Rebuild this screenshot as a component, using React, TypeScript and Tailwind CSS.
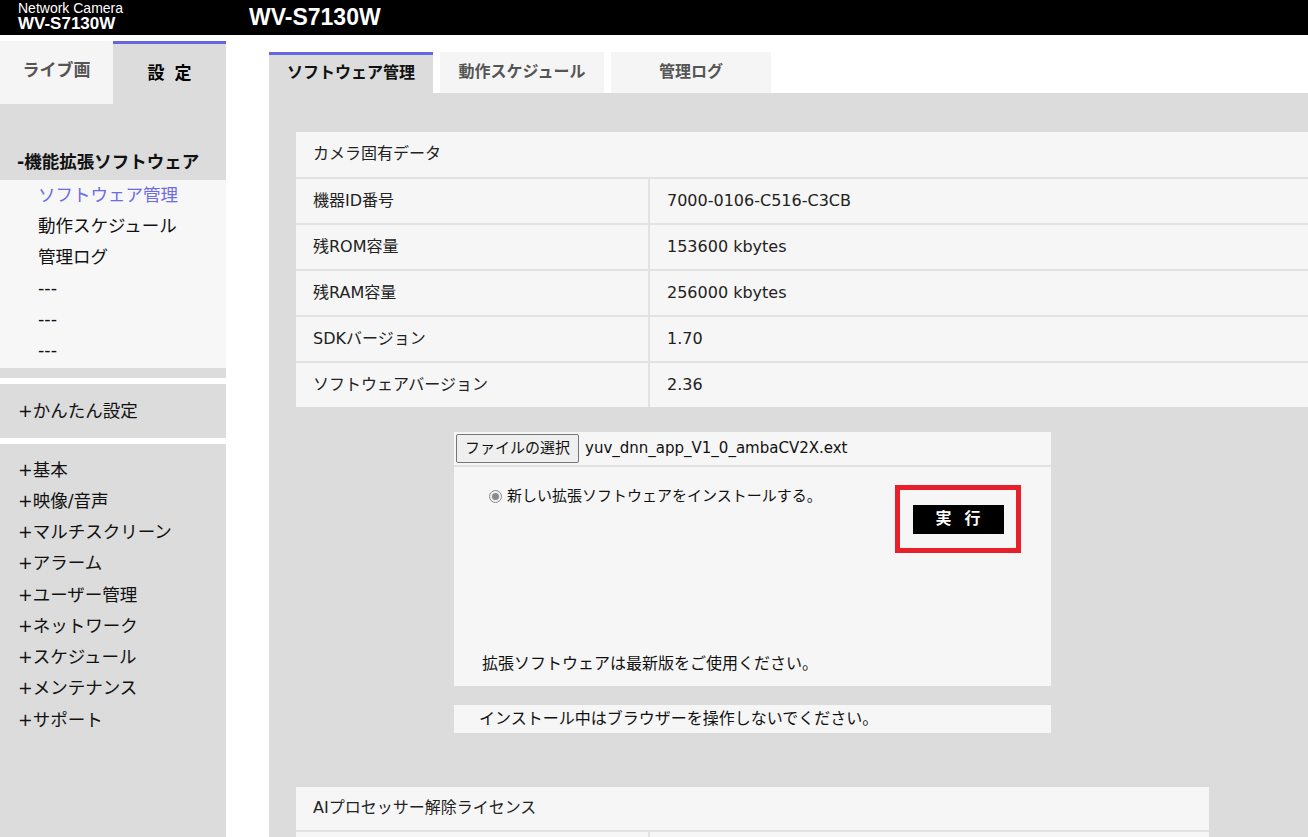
import React from "react";

const jp = { fontFamily: '"DejaVu Sans", "Noto Sans CJK JP", sans-serif' };

const cameraRows = [
  { label: "機器ID番号", value: "7000-0106-C516-C3CB" },
  { label: "残ROM容量", value: "153600 kbytes" },
  { label: "残RAM容量", value: "256000 kbytes" },
  { label: "SDKバージョン", value: "1.70" },
  { label: "ソフトウェアバージョン", value: "2.36" },
];

const subItems = ["ソフトウェア管理", "動作スケジュール", "管理ログ", "---", "---", "---"];

const menuItems = [
  "+基本",
  "+映像/音声",
  "+マルチスクリーン",
  "+アラーム",
  "+ユーザー管理",
  "+ネットワーク",
  "+スケジュール",
  "+メンテナンス",
  "+サポート",
];

function Sidebar() {
  return (
    <div className="w-[226px] shrink-0 pt-[6px] flex flex-col">
      <div className="flex h-[63px] shrink-0">
        <div className="w-[113px] bg-[#f5f5f5] flex items-center justify-center pb-[4px] text-[17px] font-bold text-[#555]">
          ライブ画
        </div>
        <div className="w-[113px] bg-[#dcdcdc] border-t-[3px] border-[#6666e0] flex items-center justify-center text-[17px] font-bold text-black tracking-[0.6em] pl-[0.6em]">
          設定
        </div>
      </div>

      <div className="bg-[#dcdcdc] h-[76px] shrink-0 flex items-end pl-[17px] pb-[5px] text-[17.5px] font-bold text-[#111]">
        -機能拡張ソフトウェア
      </div>
      <div className="bg-[#f7f7f7] pb-[2px] shrink-0">
        {subItems.map((item, i) => (
          <div
            key={i}
            className={`h-[31px] flex items-center pl-[38px] pb-[1px] text-[17.5px] ${
              i === 0 ? "text-[#6b6be6]" : "text-[#111]"
            }`}
          >
            {item}
          </div>
        ))}
      </div>
      <div className="bg-[#dcdcdc] h-[10px] shrink-0" />
      <div className="h-[6px] shrink-0" />
      <div className="bg-[#dcdcdc] h-[54px] shrink-0 flex items-center pl-[18px] text-[17.5px] text-[#111]">
        +かんたん設定
      </div>
      <div className="h-[6px] shrink-0" />
      <div className="bg-[#dcdcdc] flex-1 pt-[10px]">
        {menuItems.map((item) => (
          <div key={item} className="h-[31.25px] flex items-center pl-[18px] text-[17.5px] text-[#111]">
            {item}
          </div>
        ))}
      </div>
    </div>
  );
}

function Tabs() {
  return (
    <div className="flex gap-[7px] h-[41px] shrink-0">
      <div className="w-[164px] bg-[#dcdcdc] border-t-[3px] border-[#6666e0] flex items-center justify-center pb-[3px] text-[16px] font-bold text-[#111]">
        ソフトウェア管理
      </div>
      <div className="w-[164px] bg-[#f5f5f5] flex items-center justify-center pb-[2px] text-[16px] font-bold text-[#555]">
        動作スケジュール
      </div>
      <div className="w-[160px] bg-[#f5f5f5] flex items-center justify-center pb-[2px] text-[16px] font-bold text-[#555]">
        管理ログ
      </div>
    </div>
  );
}

function CameraTable() {
  return (
    <div className="w-[1060px] shrink-0 flex flex-col gap-[2px] bg-[#e2e2e2]">
      <div className="h-[45px] bg-[#f6f6f6] flex items-center pl-[17px] pb-[2px] text-[16px] text-[#222]">
        カメラ固有データ
      </div>
      {cameraRows.map((row) => (
        <div key={row.label} className="h-[44px] flex gap-[2px]">
          <div className="w-[352px] bg-[#f6f6f6] flex items-center pl-[17px] pb-[1px] text-[16px] text-[#222]">
            {row.label}
          </div>
          <div className="flex-1 bg-[#f6f6f6] flex items-center pl-[17px] pb-[1px] text-[16px] text-[#222]">
            {row.value}
          </div>
        </div>
      ))}
    </div>
  );
}

function InstallPanel() {
  return (
    <div className="ml-[158px] w-[597px] shrink-0 flex flex-col">
      <div className="h-[33px] bg-[#f6f6f6] flex items-center pl-[2px] gap-[6px]">
        <button className="h-[29px] px-[8px] border border-[#767676] rounded-[2px] bg-[#efefef] text-[15px] text-[#111] leading-none">
          ファイルの選択
        </button>
        <span className="text-[15px] text-[#111]">yuv_dnn_app_V1_0_ambaCV2X.ext</span>
      </div>
      <div className="h-[2px] bg-[#e2e2e2]" />
      <div className="h-[219px] bg-[#f6f6f6] flex flex-col">
        <div className="flex pt-[18px]">
          <div className="w-[441px] flex items-start pl-[35px] pt-[1px]">
            <span className="mt-[4px] w-[13px] h-[13px] rounded-full border border-[#8a8a8a] bg-[#f0f0f0] flex items-center justify-center">
              <span className="w-[7px] h-[7px] rounded-full bg-[#8a8a8a]" />
            </span>
            <span className="ml-[5px] text-[15px] text-[#111] leading-[20px]">
              新しい拡張ソフトウェアをインストールする。
            </span>
          </div>
          <div className="w-[126px] h-[68px] border-[5px] border-[#e8202a] flex items-center justify-center">
            <button className="w-[91px] h-[29px] bg-black text-white text-[16px] font-bold tracking-[0.8em] pl-[0.8em] leading-none">
              実行
            </button>
          </div>
        </div>
        <div className="flex-1" />
        <div className="pl-[28px] pb-[10px] text-[16px] text-[#111]">
          拡張ソフトウェアは最新版をご使用ください。
        </div>
      </div>
      <div className="h-[19px]" />
      <div className="h-[28px] bg-[#f6f6f6] flex items-center pl-[25px] pb-[1px] text-[16px] text-[#111]">
        インストール中はブラウザーを操作しないでください。
      </div>
    </div>
  );
}

function LicenseTable() {
  return (
    <div className="w-[913px] shrink-0 flex flex-col gap-[2px] bg-[#e2e2e2]">
      <div className="h-[43px] bg-[#f6f6f6] flex items-center pl-[17px] pb-[2px] text-[16px] text-[#222]">
        AIプロセッサー解除ライセンス
      </div>
      <div className="h-[44px] flex gap-[2px]">
        <div className="w-[352px] bg-[#f6f6f6]" />
        <div className="flex-1 bg-[#f6f6f6]" />
      </div>
    </div>
  );
}

export default function App() {
  return (
    <div className="w-[1308px] h-[837px] overflow-hidden bg-white flex flex-col" style={jp}>
      <div className="h-[35px] bg-black flex shrink-0" style={{ fontFamily: '"Liberation Sans", Arial, sans-serif' }}>
        <div className="w-[226px] pl-[18px] pt-[1px] text-white flex flex-col">
          <span className="text-[14px] leading-[14px]">Network Camera</span>
          <span className="text-[17px] leading-[18px] font-bold">WV-S7130W</span>
        </div>
        <div className="pl-[23px] text-white text-[23px] font-bold leading-[35px] pb-[2px]">WV-S7130W</div>
      </div>

      <div className="flex flex-1 min-h-0">
        <Sidebar />
        <div className="w-[43px] shrink-0" />
        <div className="flex-1 pt-[17px] flex flex-col overflow-hidden">
          <Tabs />
          <div className="flex-1 bg-[#dcdcdc] pl-[27px] pt-[39px] flex flex-col">
            <CameraTable />
            <div className="h-[25px] shrink-0" />
            <InstallPanel />
            <div className="h-[54px] shrink-0" />
            <LicenseTable />
          </div>
        </div>
      </div>
    </div>
  );
}
